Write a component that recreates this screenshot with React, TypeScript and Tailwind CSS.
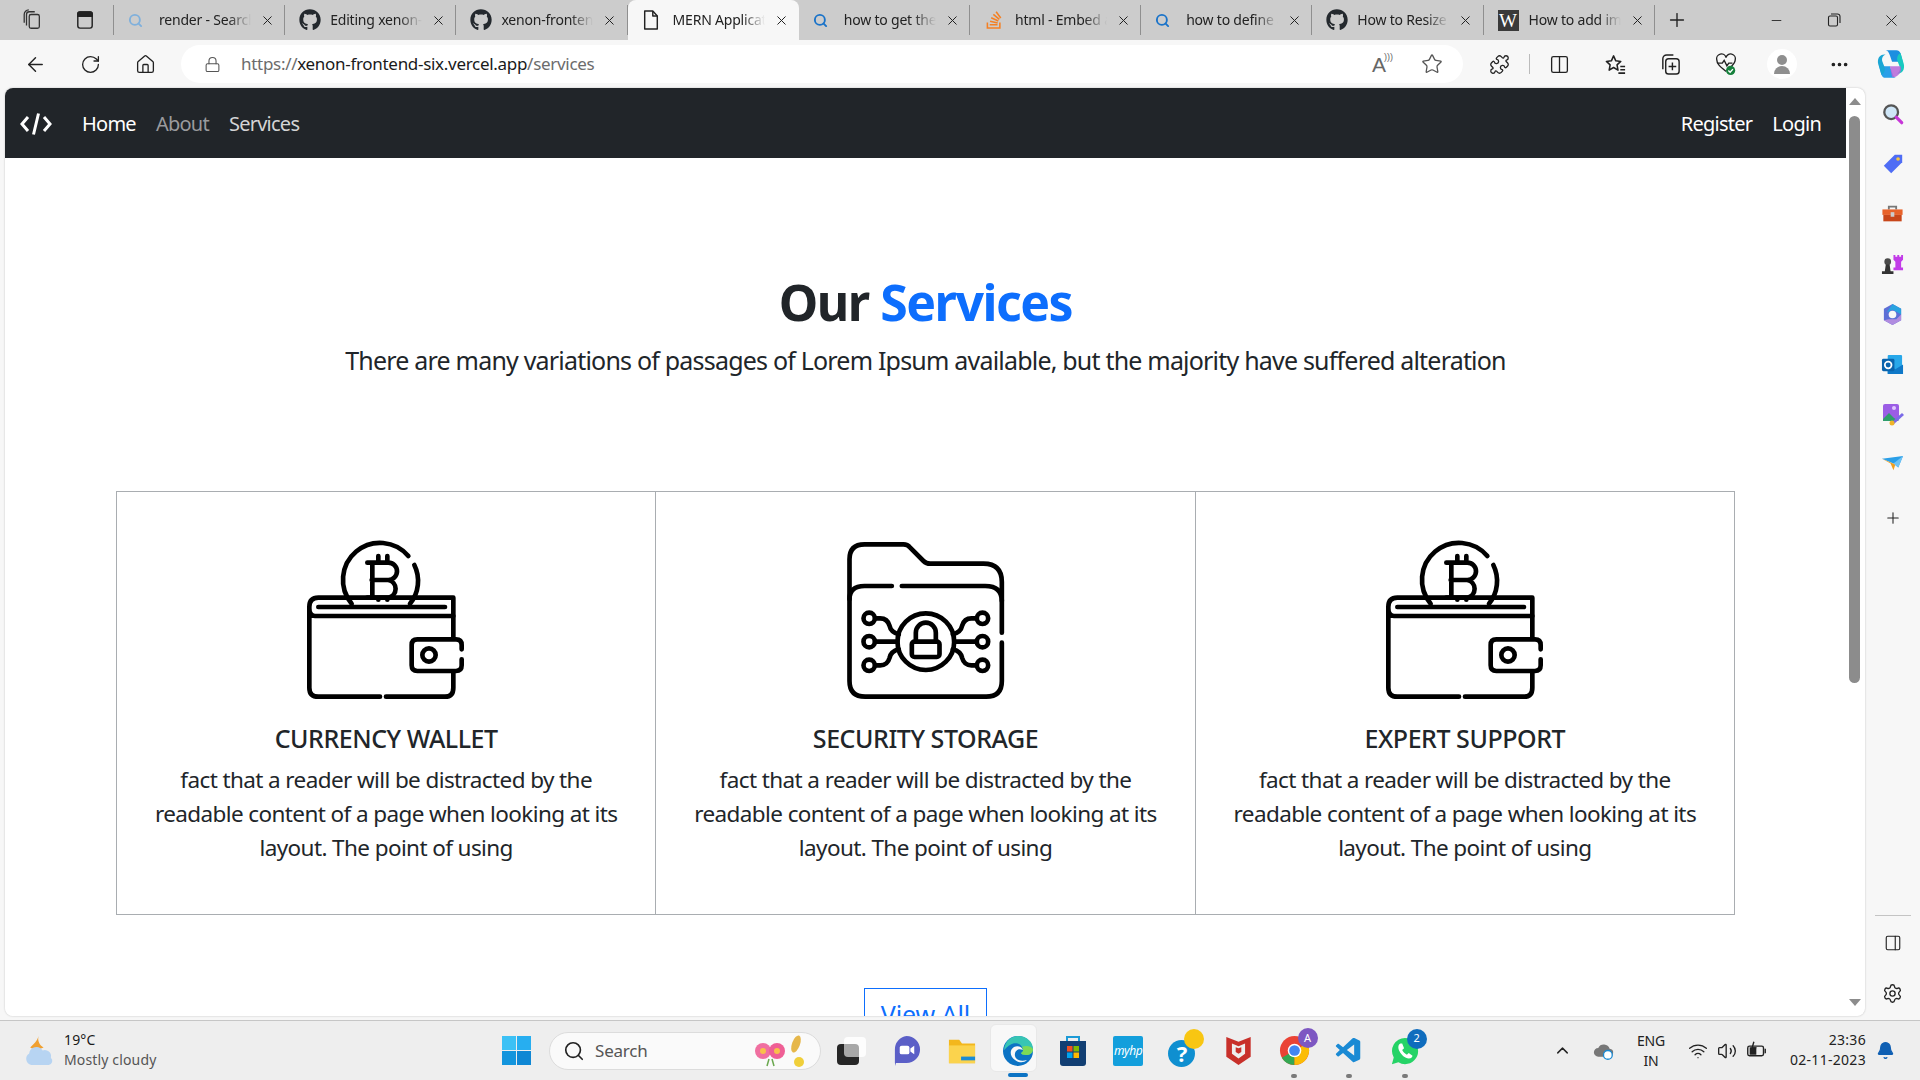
import React from 'react';
import { FaGithub, FaStackOverflow } from 'react-icons/fa';
import { VscVscode } from 'react-icons/vsc';
import {
  ArrowLeft, ChevronUp, Ellipsis, Home, Lock, Minus, PanelRight, Plus, RotateCw, Search,
  Settings, Star, Volume2, Wifi, X, Bell, Puzzle, Columns2,
} from 'lucide-react';

const sans = 'font-["Noto_Sans","Liberation_Sans",sans-serif]';

const tabs = [
  { title: 'render - Search', icon: 'search-pale' },
  { title: 'Editing xenon-frontend', icon: 'github' },
  { title: 'xenon-frontend-six', icon: 'github' },
  { title: 'MERN Application', icon: 'page', active: true },
  { title: 'how to get the', icon: 'search' },
  { title: 'html - Embed a', icon: 'stack' },
  { title: 'how to define a', icon: 'search' },
  { title: 'How to Resize an', icon: 'github' },
  { title: 'How to add image', icon: 'wiki' },
];

function TabIcon({ kind }: { kind: string }) {
  if (kind === 'github') return <FaGithub className="w-[22px] h-[22px] text-[#24292e]" />;
  if (kind === 'stack') return <FaStackOverflow className="w-[20px] h-[20px] text-[#f48024]" />;
  if (kind === 'wiki') {
    return <div className="w-[21px] h-[21px] bg-[#3a3a3a] text-white flex items-center justify-center font-['Liberation_Serif',serif] text-[19px] leading-none">W</div>;
  }
  if (kind === 'page') {
    return (
      <svg viewBox="0 0 20 24" className="w-[18px] h-[22px]" fill="none" stroke="#222" strokeWidth="1.6" strokeLinejoin="round">
        <path d="M3 2h9l5 5.5V22H3z" />
        <path d="M12 2v5.5h5" />
      </svg>
    );
  }
  const color = kind === 'search' ? 'text-[#1a73c9]' : 'text-[#7fb0dc]';
  return <Search className={`w-[15px] h-[15px] ${color}`} strokeWidth={3} />;
}

function Tab({ title, icon, active }: { title: string; icon: string; active?: boolean }) {
  return (
    <div className={`w-[171.200px] shrink-0 flex items-center ${active ? 'h-[40px] bg-[#f7f7f7] rounded-t-lg' : 'h-[30px] border-r border-[#8f8f8f]'}`}>
      <div className="w-[45px] pl-[14px] flex items-center shrink-0"><TabIcon kind={icon} /></div>
      <div className="w-[92px] pb-[2px] overflow-hidden whitespace-nowrap text-[14px] tracking-[-0.2px] text-[#222] [mask-image:linear-gradient(90deg,#000_75%,transparent)]">{title}</div>
      <X className="w-[15px] h-[15px] ml-[9px] text-[#222] shrink-0" strokeWidth={1.6} />
    </div>
  );
}

function TabStrip() {
  return (
    <div className="h-[40px] bg-[#cccccc] flex items-center shrink-0">
      <div className="w-[114px] h-[30px] flex items-center border-r border-[#8f8f8f] shrink-0">
        <div className="w-[64px] flex justify-center">
          <svg viewBox="0 0 24 24" className="w-[22px] h-[22px]" fill="none" stroke="#333" strokeWidth="1.4">
            <rect x="9" y="6" width="11" height="15" rx="2" />
            <path d="M6 18V6a3 3 0 0 1 3-3h6M3.5 15V6a5 5 0 0 1 5-5" />
          </svg>
        </div>
        <div className="w-[42px] flex justify-center">
          <svg viewBox="0 0 20 24" className="w-[18px] h-[22px]" fill="none" stroke="#222" strokeWidth="1.6">
            <rect x="2" y="3" width="16" height="18" rx="2.5" />
            <path d="M2 4.5A2 2 0 0 1 4 3h12a2 2 0 0 1 2 2v3H2z" fill="#222" />
          </svg>
        </div>
      </div>
      {tabs.map((t) => <Tab key={t.title} title={t.title} icon={t.icon} active={t.active} />)}
      <div className="w-[44px] flex justify-center shrink-0"><Plus className="w-[22px] h-[22px] text-[#222]" strokeWidth={1.5} /></div>
      <div className="ml-auto flex items-center shrink-0">
        <div className="w-[57px] flex justify-center"><Minus className="w-[15px] h-[15px] text-[#222]" strokeWidth={1.4} /></div>
        <div className="w-[57px] flex justify-center">
          <svg viewBox="0 0 14 14" className="w-[14px] h-[14px]" fill="none" stroke="#222" strokeWidth="1.1">
            <rect x="1.5" y="3" width="9" height="10" rx="1.5" />
            <path d="M4 1h6.5A2.5 2.5 0 0 1 13 3.5V10" />
          </svg>
        </div>
        <div className="w-[58px] flex justify-center"><X className="w-[19px] h-[19px] text-[#222]" strokeWidth={1.2} /></div>
      </div>
    </div>
  );
}

function Toolbar() {
  return (
    <div className="h-[48px] bg-[#f7f7f7] flex items-center shrink-0">
      <div className="w-[7px]" />
      <div className="w-[56px] flex justify-center"><ArrowLeft className="w-[23px] h-[23px] text-[#222]" strokeWidth={1.5} /></div>
      <div className="w-[55px] flex justify-center"><RotateCw className="w-[21px] h-[21px] text-[#222]" strokeWidth={1.5} /></div>
      <div className="w-[55px] flex justify-center"><Home className="w-[21px] h-[21px] text-[#222]" strokeWidth={1.5} /></div>
      <div className="w-[1282px] ml-[8px] h-[38px] bg-white rounded-[19px] flex items-center">
        <div className="w-[60px] pl-[23px]"><Lock className="w-[17px] h-[17px] text-[#555]" strokeWidth={1.5} /></div>
        <div className="text-[17px] tracking-[-0.3px] text-[#6c6c6c]">https://<span className="text-[#1a1a1a]">xenon-frontend-six.vercel.app</span>/services</div>
        <div className="ml-auto flex items-center pr-[20px] gap-[35px]">
          <div className="relative text-[21px] leading-none text-[#666] font-['Liberation_Sans',sans-serif]">A<span className="absolute -top-[1px] -right-[7px] text-[9px]">)))</span></div>
          <Star className="w-[22px] h-[22px] text-[#555]" strokeWidth={1.4} />
        </div>
      </div>
      <div className="w-[36px] ml-[18px] flex justify-center"><Puzzle className="w-[21px] h-[21px] text-[#222]" strokeWidth={1.5} /></div>
      <div className="w-px h-[20px] bg-[#bbb] ml-[12px]" />
      <div className="w-[58px] flex justify-center"><Columns2 className="w-[21px] h-[21px] text-[#222]" strokeWidth={1.5} /></div>
      <div className="w-[55px] flex justify-center">
        <svg viewBox="0 0 24 24" className="w-[23px] h-[23px]" fill="none" stroke="#222" strokeWidth="1.6" strokeLinejoin="round">
          <path d="M10 3l2.3 5.2 5.2.6-3.9 3.6 1 5.5-4.6-2.8-4.6 2.8 1-5.5L2.5 8.8l5.2-.6z" />
          <path d="M17 14h5M17 17.5h5M15 21h7" />
        </svg>
      </div>
      <div className="w-[55px] flex justify-center">
        <svg viewBox="0 0 24 24" className="w-[23px] h-[23px]" fill="none" stroke="#222" strokeWidth="1.5">
          <rect x="7" y="6" width="14" height="16" rx="3" />
          <path d="M4 17V6a4 4 0 0 1 4-4h7M14 10v8M10 14h8" />
        </svg>
      </div>
      <div className="w-[55px] flex justify-center">
        <svg viewBox="0 0 26 26" className="w-[24px] h-[24px]" fill="none" stroke="#222" strokeWidth="1.5">
          <path d="M13 21C7 16 3 13 3 8.5A5 5 0 0 1 13 6a5 5 0 0 1 10 2.500c0 3-2 5-4 7" />
          <path d="M4 12h5l2-3 3 6 2-3h4" />
          <circle cx="18" cy="20" r="5" fill="#16803c" stroke="none" />
          <path d="M15.500 20l2 2 3-3.500" stroke="#fff" />
        </svg>
      </div>
      <div className="w-[58px] flex justify-center">
        <div className="w-[30px] h-[30px] rounded-full bg-white flex flex-col items-center justify-center overflow-hidden">
          <div className="w-[10px] h-[10px] rounded-full bg-[#8f8f8f]" />
          <div className="w-[16px] h-[8px] rounded-t-full bg-[#8f8f8f] mt-px" />
        </div>
      </div>
      <div className="w-[56px] flex justify-center"><Ellipsis className="w-[21px] h-[21px] text-[#222]" strokeWidth={2.2} /></div>
      <div className="w-[47px] flex justify-center">
        <svg viewBox="0 0 28 30" className="w-[30px] h-[32px]">
          <path d="M9 2h10c2 0 3 1 4 3l2 8H15L13 7c-1-3-2-5-4-5z" fill="#1c8fe0" />
          <path d="M23 5l3 10c1 5-1 9-6 9h-1c3-1 4-4 3-7l-2-5c-1-3 1-7 3-7z" fill="#19c9c0" />
          <path d="M19 28H9c-2 0-3-1-4-3l-2-8h10l2 6c1 3 2 5 4 5z" fill="#2a9fe8" />
          <path d="M5 25L2 15C1 10 3 6 8 6h1C6 7 5 10 6 13l2 5c1 3-1 7-3 7z" fill="#1ba6d4" />
          <path d="M13 17h10c1 3 0 6-2 8-2 2-4 3-6 2z" fill="#b565d8" opacity="0.85" />
        </svg>
      </div>
    </div>
  );
}

function WalletIcon() {
  return (
    <svg viewBox="0 0 636 570" className="w-[212px] h-[190px]" fill="none" stroke="#000" strokeWidth="14" strokeLinecap="round" strokeLinejoin="round">
      <path d="M215 248A108 108 0 0 1 385 105M403 132A108 108 0 0 1 390 248" />
      <path d="M262 125H325a26 26 0 0 1 0 52H275M325 177a27 27 0 0 1 0 53H262M277 125V230M295 105V125M322 105V125M295 230V236M322 230V236" />
      <path d="M300 527H115Q88 527 88 500V258Q88 230 115 230H520V285H105Q88 285 88 262" />
      <path d="M115 258H495" />
      <path d="M520 285V350M520 452V500Q520 527 495 527H318" />
      <path d="M545 385V372Q545 355 528 355H412Q395 355 395 372V433Q395 450 412 450H528Q545 450 545 433V415" />
      <circle cx="447" cy="402" r="20" />
    </svg>
  );
}

function FolderIcon() {
  return (
    <svg viewBox="0 0 632 570" className="w-[211px] h-[190px]" fill="none" stroke="#000" strokeWidth="14" strokeLinecap="round" strokeLinejoin="round">
      <path d="M88 235V115Q88 70 133 70H250Q262 70 270 80L310 120Q318 128 330 128H490Q545 128 545 183V335" />
      <path d="M545 365V480Q545 527 498 527H135Q88 527 88 480V235Q88 195 133 195H215" />
      <path d="M245 195H495Q545 195 545 240" />
      <circle cx="317" cy="362" r="85" />
      <rect x="275" y="362" width="83" height="46" rx="8" />
      <path d="M287 360V335a30 30 0 0 1 60 0V360" />
      <circle cx="147" cy="292" r="17" />
      <circle cx="147" cy="362" r="17" />
      <circle cx="147" cy="433" r="17" />
      <circle cx="487" cy="292" r="17" />
      <circle cx="487" cy="362" r="17" />
      <circle cx="487" cy="433" r="17" />
      <path d="M165 292H180Q202 292 208 314Q212 334 236 340M165 362H232M165 433H180Q202 433 208 411Q212 391 236 385" />
      <path d="M469 292H454Q432 292 426 314Q422 334 398 340M469 362H402M469 433H454Q432 433 426 411Q422 391 398 385" />
    </svg>
  );
}

const services = [
  { title: 'CURRENCY WALLET', icon: <WalletIcon /> },
  { title: 'SECURITY STORAGE', icon: <FolderIcon /> },
  { title: 'EXPERT SUPPORT', icon: <WalletIcon /> },
];

function ServiceCard({ title, icon }: { title: string; icon: React.ReactNode }) {
  return (
    <div className="flex-1 border border-[#a9adb1] -ml-px first:ml-0 h-[424px] flex flex-col items-center pt-[29px] text-[#212529] text-center">
      {icon}
      <h5 className="mt-[12px] text-[25px] leading-[30px] font-medium tracking-[-0.45px]">{title}</h5>
      <p className="mt-[10px] w-[480px] text-[22.5px] leading-[33.75px] tracking-[-0.6px]">
        fact that a reader will be distracted by the readable content of a page when looking at its layout. The point of using
      </p>
    </div>
  );
}

function Page() {
  return (
    <div className="flex-1 h-full min-w-0 overflow-hidden bg-white">
      <nav className="h-[70px] bg-[#212529] flex items-center pl-[15px] pr-[25px] pt-[2px] text-[20px] tracking-[-0.75px]">
        <svg viewBox="0 0 32 24" className="w-[32px] h-[24px] mr-[30px]" fill="none" stroke="#fff" strokeWidth="3">
          <path d="M8 5l-6 7 6 7M24 5l6 7-6 7M18.500 1.500l-5 21" />
        </svg>
        <a className="text-white">Home</a>
        <a className="ml-[20px] text-[#9a9b9d]">About</a>
        <a className="ml-[20px] text-[#d4d4d5]">Services</a>
        <a className="ml-auto text-white">Register</a>
        <a className="ml-[20px] text-white">Login</a>
      </nav>
      <div className="flex flex-col items-center pt-[114px] text-[#212529]">
        <h1 className="text-[50px] leading-[60px] font-bold tracking-[-1.5px]">Our <span className="text-[#0d6efd]">Services</span></h1>
        <p className="mt-[10px] text-[25px] leading-[37px] tracking-[-0.8px]">
          There are many variations of passages of Lorem Ipsum available, but the majority have suffered alteration
        </p>
        <div className="mt-[112px] w-[1619px] flex">
          {services.map((s) => <ServiceCard key={s.title} title={s.title} icon={s.icon} />)}
        </div>
        <button className="mt-[73px] h-[54px] w-[123px] border border-[#0d6efd] text-[#0d6efd] text-[25px] tracking-[-0.1px]">View All</button>
      </div>
    </div>
  );
}

function Scrollbar() {
  return (
    <div className="w-[19px] h-full bg-white rounded-r-lg flex flex-col items-center shrink-0 pr-[2px] pt-[10px] pb-[10px]">
      <div className="w-0 h-0 border-x-[6px] border-x-transparent border-b-[7px] border-b-[#8c8c8c]" />
      <div className="w-[11px] h-[567px] mt-[11px] bg-[#8c8c8c] rounded-full" />
      <div className="w-0 h-0 mt-auto border-x-[6px] border-x-transparent border-t-[7px] border-t-[#8c8c8c]" />
    </div>
  );
}

function SideBar() {
  return (
    <div className="w-[55px] h-full flex flex-col items-center pt-[15px] shrink-0">
      <div className="h-[50px] flex items-start">
        <svg viewBox="0 0 24 24" className="w-[22px] h-[22px]">
          <circle cx="10" cy="10" r="7.500" fill="#cfe6f7" stroke="#555" strokeWidth="2.500" />
          <path d="M15.500 15.500l6 6" stroke="#c636d8" strokeWidth="3.500" strokeLinecap="round" />
        </svg>
      </div>
      <div className="h-[50px] flex items-start">
        <svg viewBox="0 0 24 24" className="w-[22px] h-[22px]">
          <path d="M14 2h8v8L10 22 2 14z" fill="#4f6df5" />
          <circle cx="17.500" cy="6.500" r="2" fill="#f5c542" />
        </svg>
      </div>
      <div className="h-[50px] flex items-start">
        <svg viewBox="0 0 24 24" className="w-[23px] h-[22px]">
          <path d="M8 7V4h8v3" fill="none" stroke="#777" strokeWidth="2" />
          <rect x="1" y="7" width="22" height="6" fill="#e8622a" />
          <rect x="2" y="13" width="20" height="7" fill="#c8461a" />
          <rect x="10" y="10" width="4" height="5" fill="#ccc" />
        </svg>
      </div>
      <div className="h-[50px] flex items-start">
        <svg viewBox="0 0 24 24" className="w-[23px] h-[23px]">
          <path d="M13 2h2v2h2V2h2v2h2V2h2v5l-2 2v6h2v3H13v-3h2V9l-2-2z" fill="#c23ce8" />
          <circle cx="7" cy="9" r="3.500" fill="#4a4a4a" />
          <path d="M5 12h4l1 7h3v3H1v-3h3z" fill="#333" />
        </svg>
      </div>
      <div className="h-[50px] flex items-start">
        <svg viewBox="0 0 24 24" className="w-[23px] h-[23px]">
          <path d="M12 1l9 5v12l-9 5-9-5V6z" fill="#5d6fd6" />
          <path d="M12 1l9 5v6l-5-3-4-2-6 3z" fill="#2aa3e0" />
          <path d="M3 18l9 5 9-5v-6l-5 5H8z" fill="#b18ce0" />
          <circle cx="12" cy="12" r="4" fill="#f7f7f7" />
        </svg>
      </div>
      <div className="h-[50px] flex items-start">
        <svg viewBox="0 0 24 24" className="w-[23px] h-[23px]">
          <rect x="7" y="2" width="15" height="20" rx="1" fill="#28a8ea" />
          <path d="M7 12l8 5 8-5v10H7z" fill="#0f78c8" />
          <rect x="1" y="6" width="13" height="13" rx="1.500" fill="#0a64ad" />
          <circle cx="7.500" cy="12.500" r="3.500" fill="none" stroke="#fff" strokeWidth="1.800" />
        </svg>
      </div>
      <div className="h-[50px] flex items-start">
        <svg viewBox="0 0 24 24" className="w-[24px] h-[24px]">
          <rect x="2" y="1" width="16" height="17" rx="2" fill="#9b5de5" />
          <path d="M2 16l6-6 5 5 5 3H2z" fill="#2e9e6b" />
          <circle cx="13" cy="5" r="2" fill="#e0c8ff" />
          <path d="M11 19l10-9 2 2-10 9z" fill="#7a6ae8" />
          <circle cx="11" cy="20" r="2.500" fill="#f0b429" />
        </svg>
      </div>
      <div className="h-[56px] flex items-start">
        <svg viewBox="0 0 24 24" className="w-[23px] h-[23px]">
          <path d="M1 6l22-3-5 12-5-4z" fill="#2a9fe8" />
          <path d="M1 6l9 5 3 7 2-6z" fill="#f0a020" />
          <path d="M18 15l5-12-10 8z" fill="#6fc3f5" />
        </svg>
      </div>
      <Plus className="w-[18px] h-[18px] text-[#222]" strokeWidth={1.4} />
      <div className="mt-auto w-[36px] h-px bg-[#c4c4c4] mb-[18px]" />
      <PanelRight className="w-[18px] h-[18px] text-[#222] mb-[31px]" strokeWidth={1.5} />
      <Settings className="w-[21px] h-[21px] text-[#222] mb-[12px]" strokeWidth={1.5} />
    </div>
  );
}

function AppSlot({ children, dot }: { children: React.ReactNode; dot?: boolean }) {
  return (
    <div className="w-[55.300px] h-[48px] flex flex-col items-center justify-center relative shrink-0">
      {children}
      {dot && <div className="absolute bottom-[-3px] w-[6px] h-[4px] rounded-full bg-[#7a7a7a]" />}
    </div>
  );
}

function CountBadge({ label, color, cls }: { label: string; color: string; cls: string }) {
  return <div className={`absolute ${cls} ${color} w-[20px] h-[20px] rounded-full text-white text-[11px] flex items-center justify-center`}>{label}</div>;
}

function Taskbar() {
  return (
    <div className="h-[60px] bg-[#eeeeee] border-t border-[#c6c6c6] flex items-center shrink-0">
      <div className="w-[64px] pl-[23px] shrink-0">
        <svg viewBox="0 0 32 32" className="w-[33px] h-[33px]">
          <path d="M15 2c-1 5-5 8-8 11l5 3 8-3c-4-2-6-6-5-11z" fill="#f0a030" />
          <path d="M8 30a6 6 0 0 1-2-11 7 7 0 0 1 13-3 6 6 0 0 1 8 7 4 4 0 0 1-2 7z" fill="#b7d4f2" />
        </svg>
      </div>
      <div className="w-[426px] pb-[2px] text-[14px] leading-[20px] tracking-[0.15px] shrink-0">
        <div className="text-[#1a1a1a]">19°C</div>
        <div className="text-[#555]">Mostly cloudy</div>
      </div>
      <div className="w-[59px] pl-[12px] shrink-0">
        <div className="w-[29px] h-[29px] grid grid-cols-2 gap-px">
          <div className="bg-[#3cc1f5]" />
          <div className="bg-[#27aef0]" />
          <div className="bg-[#1395dd]" />
          <div className="bg-[#0f87d4]" />
        </div>
      </div>
      <div className="w-[272px] mr-[3px] h-[38px] rounded-full bg-[#fafafa] border border-[#dcdcdc] flex items-center pl-[13px] shrink-0">
        <Search className="w-[22px] h-[22px] text-[#222]" strokeWidth={1.8} />
        <span className="ml-[10px] text-[17px] tracking-[-0.2px] text-[#555]">Search</span>
        <svg viewBox="0 0 66 36" className="ml-auto mr-[5px] w-[66px] h-[36px]">
          <circle cx="14" cy="18" r="8" fill="#f06fa0" />
          <circle cx="28" cy="18" r="8" fill="#ef5f95" />
          <circle cx="14" cy="18" r="3" fill="#f9c04a" />
          <circle cx="28" cy="18" r="3" fill="#f9c04a" />
          <path d="M20 26l-2 7M23 26l2 7" stroke="#6aa84f" strokeWidth="1.500" />
          <ellipse cx="47" cy="11" rx="4" ry="9" transform="rotate(20 47 11)" fill="#e6b74a" />
          <ellipse cx="50" cy="29" rx="5" ry="5" fill="#f0cf3a" />
        </svg>
      </div>
      <AppSlot>
        <div className="relative w-[29px] h-[28px]">
          <div className="absolute right-0 top-0 w-[22px] h-[20px] bg-[#f9f9f9] rounded-sm" />
          <div className="absolute left-0 bottom-0 w-[22px] h-[21px] bg-[#262626] rounded-sm" />
          <div className="absolute right-0 top-0 w-[22px] h-[20px] bg-white/60 rounded-sm" />
        </div>
      </AppSlot>
      <AppSlot>
        <svg viewBox="0 0 30 32" className="w-[29px] h-[31px]">
          <path d="M15 1a14 14 0 0 1 0 28H4v3l-1-3V15A14 14 0 0 1 15 1z" fill="#5b5fc7" />
          <rect x="8" y="11" width="10" height="9" rx="2" fill="#fff" />
          <path d="M19 14l4-3v9l-4-3z" fill="#fff" />
        </svg>
      </AppSlot>
      <AppSlot>
        <svg viewBox="0 0 30 30" className="w-[30px] h-[28px]">
          <path d="M1 3h11l3 4h14v21H1z" fill="#f3b71c" />
          <rect x="1" y="9" width="28" height="19" fill="#fbd34d" />
          <rect x="14" y="21" width="15" height="4" fill="#1a8ad4" />
        </svg>
      </AppSlot>
      <AppSlot>
        <div className="absolute -left-[0px] top-[-3px] w-[47px] h-[48px] bg-[#f8f8f8] rounded-md border border-[#e8e8e8]" />
        <svg viewBox="0 0 32 32" className="relative w-[32px] h-[32px]">
          <circle cx="16" cy="16" r="15" fill="#0c73c4" />
          <path d="M2 15C3 6 9 1 16 1c9 0 15 6 15 13 0 4-3 6-7 6-3 0-5-1-5-2 2-1 3-3 1-6-2-4-8-5-12-2-4 2-5 5-6 5z" fill="#37c5b4" />
          <path d="M31 14c0 4-3 6-7 6-3 0-5-1-5-2 2-1 3-3 1-6 4-2 9-1 11 2z" fill="#7dd957" />
          <path d="M13 25c-5-3-6-10-1-13 4-2 8 0 9 3-5-2-9 1-8 6 1 4 6 6 12 4-3 3-8 3-12 0z" fill="#f8f8f8" />
        </svg>
        <div className="absolute bottom-[-2px] w-[20px] h-[4px] rounded-full bg-[#0c73c4]" />
      </AppSlot>
      <AppSlot>
        <svg viewBox="0 0 28 32" className="w-[28px] h-[32px]">
          <path d="M8 7V2h12v5" fill="none" stroke="#1c9ad6" strokeWidth="2" />
          <path d="M1 6h26v22a3 3 0 0 1-3 3H4a3 3 0 0 1-3-3z" fill="#123f73" />
          <rect x="8" y="11" width="5.500" height="5.500" fill="#f25022" />
          <rect x="14.500" y="11" width="5.500" height="5.500" fill="#7fba00" />
          <rect x="8" y="17.500" width="5.500" height="5.500" fill="#00a4ef" />
          <rect x="14.500" y="17.500" width="5.500" height="5.500" fill="#ffb900" />
        </svg>
      </AppSlot>
      <AppSlot>
        <div className="w-[30px] h-[30px] bg-[#139fdc] rounded-[2px] text-white text-[12px] italic flex items-center justify-center tracking-[-0.5px]">myhp</div>
      </AppSlot>
      <AppSlot>
        <div className="relative w-[30px] h-[32px]">
          <div className="absolute left-0 bottom-0 w-[27px] h-[27px] rounded-full bg-[#0f8fd0] text-white text-[22px] font-bold flex items-center justify-center">?</div>
          <div className="absolute right-[-6px] top-[-6px] w-[20px] h-[20px] rounded-full bg-[#f8c612]" />
        </div>
      </AppSlot>
      <AppSlot>
        <svg viewBox="0 0 28 32" className="w-[27px] h-[30px]">
          <path d="M1 1l13 5 13-5v21L14 31 1 22z" fill="#c8302a" />
          <path d="M7 8l7 3 7-3v11l-7 5-7-5z" fill="#eeeeee" />
          <path d="M11 12l3 1 3-1v5l-3 2-3-2z" fill="#c8302a" />
        </svg>
      </AppSlot>
      <AppSlot dot>
        <div className="relative">
          <svg viewBox="0 0 32 32" className="w-[31px] h-[31px]">
            <circle cx="16" cy="16" r="15" fill="#ea4335" />
            <path d="M16 16L3 23.500A15 15 0 0 0 16 31z" fill="#34a853" />
            <path d="M16 16l13-7.500A15 15 0 0 1 16 31z" fill="#fbbc05" />
            <circle cx="16" cy="16" r="7" fill="#fff" />
            <circle cx="16" cy="16" r="5.500" fill="#4285f4" />
          </svg>
          <CountBadge label="A" color="bg-[#7d57c2]" cls="-top-[7px] -right-[8px]" />
        </div>
      </AppSlot>
      <AppSlot dot><VscVscode className="w-[30px] h-[30px] text-[#1a8ad4]" /></AppSlot>
      <AppSlot dot>
        <div className="relative">
          <svg viewBox="0 0 32 32" className="w-[30px] h-[30px]">
            <path d="M16 2a14 14 0 0 1 0 28 14 14 0 0 1-7-2l-7 2 2-7A14 14 0 0 1 16 2z" fill="#25d366" />
            <path d="M11 8c-2 1-3 4-1 8s6 8 10 8c3 0 4-2 4-3l-4-3-2 2c-2-1-4-3-5-5l2-2-2-5z" fill="#fff" />
          </svg>
          <CountBadge label="2" color="bg-[#0f6cbd]" cls="-top-[7px] -right-[7px]" />
        </div>
      </AppSlot>
      <div className="ml-auto flex items-center shrink-0 pr-[25px]">
        <ChevronUp className="w-[19px] h-[19px] text-[#222] mr-[21px]" strokeWidth={1.8} />
        <svg viewBox="0 0 24 24" className="w-[21px] h-[21px] mr-[19px]">
          <path d="M6 19a5 5 0 0 1 0-10 7 7 0 0 1 13 1 4.500 4.500 0 0 1-1 9z" fill="#777" />
          <circle cx="17" cy="17" r="5" fill="#fff" stroke="#1a8ad4" strokeWidth="1.500" />
        </svg>
        <div className="w-[36px] text-center text-[14px] leading-[20px] tracking-[-0.2px] text-[#222]">ENG<br />IN</div>
        <Wifi className="w-[20px] h-[20px] text-[#222] ml-[19px]" strokeWidth={1.6} />
        <Volume2 className="w-[20px] h-[20px] text-[#222] ml-[9px]" strokeWidth={1.6} />
        <svg viewBox="0 0 24 24" className="w-[21px] h-[21px] ml-[9px]" fill="none" stroke="#222" strokeWidth="1.600">
          <rect x="2" y="7" width="18" height="11" rx="2" />
          <path d="M22 10v5" />
          <path d="M5 9h6v7H5z" fill="#222" />
          <path d="M9 2L7 9h4l-2 5" />
        </svg>
        <div className="w-[95px] ml-[4px] pb-[2px] text-right text-[14px] leading-[20px] tracking-[0.3px] text-[#222]">
          <div>23:36</div>
          <div>02-11-2023</div>
        </div>
        <Bell className="w-[19px] h-[19px] ml-[10px] text-[#0f5fb3] fill-[#0f5fb3]" strokeWidth={1.5} />
      </div>
    </div>
  );
}

export default function App() {
  return (
    <div className={`w-[1920px] h-[1080px] overflow-hidden flex flex-col bg-[#f7f7f7] ${sans}`}>
      <TabStrip />
      <Toolbar />
      <div className="flex-1 min-h-0 flex pl-[5px] pb-[4px]">
        <div className="w-[1860px] h-full flex rounded-lg overflow-hidden shadow-[0_0_2px_#bbb]">
          <Page />
          <Scrollbar />
        </div>
        <SideBar />
      </div>
      <Taskbar />
    </div>
  );
}
